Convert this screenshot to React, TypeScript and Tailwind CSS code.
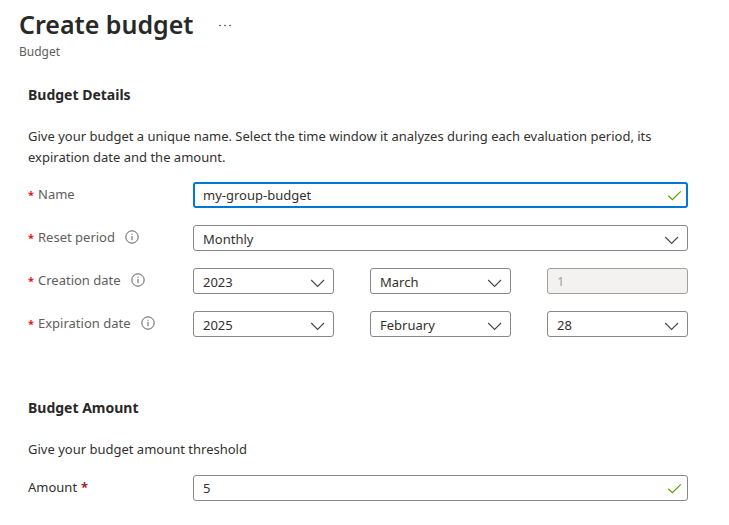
import type { ReactNode } from "react";

function CheckMark() {
  return (
    <svg className="pointer-events-none absolute top-1/2 right-1.5 size-4 -translate-y-1/2" viewBox="0 0 16 16" fill="none" stroke="#57a300" strokeWidth="1.2" aria-hidden="true">
      <path d="M2.3 8.8 6.4 12.6 14.8 4.4" />
    </svg>
  );
}

function InfoIcon() {
  return (
    <svg className="ml-2.5 size-3.5" viewBox="0 0 14 14" fill="none" stroke="#605e5c" aria-hidden="true">
      <circle cx="7" cy="7" r="6.2" strokeWidth="1" />
      <path d="M7 6v4.2M7 3.8v1.1" strokeWidth="1" />
    </svg>
  );
}

function Row({ id, label, info, children }: { id: string; label: string; info?: boolean; children: ReactNode }) {
  return (
    <div className="flex">
      <label htmlFor={id} className="flex h-6 w-[165px] shrink-0 items-center text-[#605e5c]">
        <span className="w-2.5 text-[11px] font-bold text-[#e81123]">*</span>
        {label}
        {info && <InfoIcon />}
      </label>
      <div className="min-w-0 flex-1">{children}</div>
    </div>
  );
}

function Dropdown({ id, label, value }: { id?: string; label?: string; value: string }) {
  return (
    <div className="relative">
      <select
        id={id}
        aria-label={label}
        defaultValue={value}
        className="block h-[26px] w-full appearance-none rounded-[3px] border border-[#8a8886] bg-white pt-0.5 pr-8 pl-[9px] text-[#323130]"
      >
        <option>{value}</option>
      </select>
      <svg className="pointer-events-none absolute top-[7px] right-2 size-4" viewBox="0 0 16 16" fill="none" stroke="#484644" strokeWidth="1.1" aria-hidden="true">
        <path d="M1.2 5 7.6 11.4 14 5" />
      </svg>
    </div>
  );
}

export default function App() {
  return (
    <main className="bg-white pt-2 pr-[41px] pb-6 pl-7 font-['Noto_Sans',sans-serif] text-[13px] leading-[21px] text-[#323130]">
      <header className="-ml-[9px]">
        <div className="flex items-center">
          <h1 className="text-[25px] leading-8 font-semibold text-[#292827]">Create budget</h1>
          <button type="button" aria-label="More actions" className="ml-6 flex h-8 items-center">
            <svg className="h-4 w-3.5" viewBox="0 0 14 16" fill="#323130" aria-hidden="true">
              <circle cx="2" cy="9.5" r="0.8" />
              <circle cx="7" cy="9.5" r="0.8" />
              <circle cx="12" cy="9.5" r="0.8" />
            </svg>
          </button>
        </div>
        <p className="mt-0.5 text-[12px] leading-5 text-[#605e5c]">Budget</p>
      </header>

      <section className="mt-[23px]">
        <h2 className="text-[14px] leading-5 font-bold text-[#292827]">Budget Details</h2>
        <p className="mt-[21px]">
          Give your budget a unique name. Select the time window it analyzes during each evaluation period, its expiration date and the amount.
        </p>
        <div className="mt-3.5 flex flex-col gap-[17px]">
          <Row id="name" label="Name">
            <div className="relative">
              <input
                id="name"
                type="text"
                defaultValue="my-group-budget"
                className="block h-[26px] w-full rounded-[3px] border-2 border-[#0078d4] pr-7 pl-2 outline-none"
              />
              <CheckMark />
            </div>
          </Row>
          <Row id="reset" label="Reset period" info>
            <Dropdown id="reset" value="Monthly" />
          </Row>
          <Row id="creation" label="Creation date" info>
            <div className="grid grid-cols-3 gap-9">
              <Dropdown id="creation" value="2023" />
              <Dropdown label="Creation month" value="March" />
              <input
                type="text"
                aria-label="Creation day"
                defaultValue="1"
                disabled
                className="block h-[26px] w-full rounded-[3px] border border-[#a19f9d] bg-[#f3f2f1] pl-[9px] text-[#a19f9d]"
              />
            </div>
          </Row>
          <Row id="expiration" label="Expiration date" info>
            <div className="grid grid-cols-3 gap-9">
              <Dropdown id="expiration" value="2025" />
              <Dropdown label="Expiration month" value="February" />
              <Dropdown label="Expiration day" value="28" />
            </div>
          </Row>
        </div>
      </section>

      <section className="mt-[61px]">
        <h2 className="text-[14px] leading-5 font-bold text-[#292827]">Budget Amount</h2>
        <p className="mt-[21px]">Give your budget amount threshold</p>
        <div className="mt-[15px] flex">
          <label htmlFor="amount" className="flex h-6 w-[165px] shrink-0 items-center">
            Amount <span className="ml-1 font-bold text-[#a4262c]">*</span>
          </label>
          <div className="relative min-w-0 flex-1">
            <input
              id="amount"
              type="text"
              inputMode="numeric"
              defaultValue="5"
              className="block h-[26px] w-full rounded-[3px] border border-[#8a8886] pr-7 pl-[9px]"
            />
            <CheckMark />
          </div>
        </div>
      </section>
    </main>
  );
}
